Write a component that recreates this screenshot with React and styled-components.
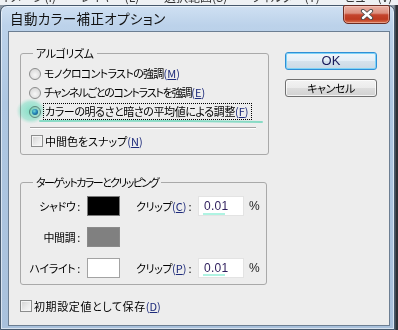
import React from 'react';
import styled, { createGlobalStyle, css } from 'styled-components';

const Global = createGlobalStyle`
  html, body { margin: 0; padding: 0; background: #2f353c; }
  body { font-family: "Noto Sans CJK JP", "Noto Sans", sans-serif; }
`;

const Screen = styled.div`
  position: relative;
  width: 398px;
  height: 330px;
  overflow: hidden;
  display: flex;
  flex-direction: column;
  background: linear-gradient(90deg, #8d98a4 0, #8d98a4 394px, #2c3137 396px, #2c3137 100%);
  font-family: "Noto Sans CJK JP", sans-serif;
  font-feature-settings: "palt";
  color: #000;
`;

const BehindMenu = styled.div`
  height: 5px;
  flex: none;
  overflow: hidden;
  background: #eef1f4;
  white-space: nowrap;
`;

const BehindText = styled.div`
  margin-top: -10px;
  font-size: 12px;
  line-height: 14px;
  color: #333;
  word-spacing: 22px;
`;

const Window = styled.div`
  width: 395px;
  height: 325px;
  box-sizing: border-box;
  border: 1px solid #46586c;
  border-radius: 7px 7px 0 0;
  padding: 0 4px 3px 7px;
  display: flex;
  flex-direction: column;
  background: linear-gradient(180deg, #cfe0f2 0%, #bcd2ea 6%, #aec7e2 30%, #a9c1dc 100%);
  box-shadow: inset 0 0 0 1px rgba(255, 255, 255, 0.55);
`;

const TitleBar = styled.div`
  height: 25px;
  flex: none;
  display: flex;
  align-items: flex-start;
`;

const TitleText = styled.div`
  padding-left: 2px;
  font-size: 13.5px;
  line-height: 24px;
  color: #111;
  letter-spacing: 0.4px;
`;

const CloseButton = styled.div`
  margin-left: auto;
  margin-top: -1px;
  width: 47px;
  height: 19px;
  box-sizing: border-box;
  border: 1px solid #6b2d24;
  border-radius: 2px 2px 5px 5px;
  display: flex;
  align-items: center;
  justify-content: center;
  background: linear-gradient(180deg, #eab2a6 0%, #dc8f7e 42%, #c4452d 52%, #bd3a20 78%, #d9714f 100%);
  box-shadow: inset 0 0 0 1px rgba(255, 220, 210, 0.45);
`;

const Client = styled.div`
  flex: 1;
  box-sizing: border-box;
  border: 1px solid #6c7e92;
  background: #ededed;
  display: flex;
  align-items: flex-start;
  gap: 16px;
  padding: 14px 0 0 11px;
  font-size: 11px;
  letter-spacing: -0.4px;
`;

const LeftCol = styled.div`
  width: 249px;
  display: flex;
  flex-direction: column;
`;

const RightCol = styled.div`
  padding-top: 6px;
  display: flex;
  flex-direction: column;
  gap: 9px;
`;

const Group = styled.fieldset`
  margin: ${p => p.$top || 0}px 0 0 0;
  width: ${p => p.$width}px;
  box-sizing: border-box;
  min-width: 0;
  border: 1px solid #a9a9a9;
  border-radius: 3px;
  padding: ${p => p.$pad};
  display: flex;
  flex-direction: column;
`;

const Legend = styled.legend`
  margin-left: ${p => p.$ml}px;
  padding: 0 3px;
  font-size: 11px;
  line-height: 14px;
  letter-spacing: ${p => p.$ls ?? -0.4}px;
  color: #000;
`;

const OptionRow = styled.div`
  height: 19px;
  display: flex;
  align-items: center;
  gap: 3px;
`;

const RadioDot = styled.span`
  width: 12px;
  height: 12px;
  flex: none;
  box-sizing: border-box;
  border-radius: 50%;
  border: 1px solid #8b8c8c;
  background: radial-gradient(circle at 50% 60%, #f7f7f7 0%, #dcdcdc 70%, #cfcfcf 100%);
  display: flex;
  align-items: center;
  justify-content: center;
  ${p => p.$on && css`
    &::after {
      content: "";
      width: 6px;
      height: 6px;
      border-radius: 50%;
      background: radial-gradient(circle at 38% 35%, #b8e2fb 0%, #3b8fd6 45%, #14427e 100%);
    }
  `}
`;

const Label = styled.span`
  font-size: 11px;
  line-height: 15px;
  white-space: nowrap;
  letter-spacing: ${p => p.$ls ?? -0.4}px;
  ${p => p.$focus && css`
    outline: 1px dotted #000;
    outline-offset: 0;
    padding: 0 2px 0 1px;
  `}
`;

const Mn = styled.span`
  color: #1d2a7a;
  letter-spacing: 0;
  & u { text-underline-offset: 1px; }
`;

const Separator = styled.div`
  height: 1px;
  margin: 6px 4px 5px 1px;
  background: #a2a2a2;
  box-shadow: 0 1px 0 #fff;
`;

const CheckRow = styled.div`
  height: 16px;
  display: flex;
  align-items: center;
  gap: 2px;
  margin-left: ${p => p.$ml || 0}px;
  margin-top: ${p => p.$mt || 0}px;
`;

const CheckBox = styled.span`
  width: 12px;
  height: 12px;
  flex: none;
  box-sizing: border-box;
  border: 1px solid #8b8c8c;
  background: linear-gradient(135deg, #d2d2d2 0%, #ececec 60%, #f8f8f8 100%);
  box-shadow: inset 0 0 0 1px #f4f4f4;
`;

const TargetRow = styled.div`
  height: 20px;
  display: flex;
  align-items: center;
  margin-top: ${p => p.$mt || 0}px;
`;

const RowLabel = styled.span`
  width: 55px;
  flex: none;
  text-align: right;
  font-size: 11px;
  line-height: 15px;
  white-space: nowrap;
`;

const Swatch = styled.span`
  width: 33px;
  height: 20px;
  margin-left: 7px;
  flex: none;
  box-sizing: border-box;
  border: 1px solid ${p => p.$border};
  background: ${p => p.$color};
`;

const ClipLabel = styled.span`
  margin-left: 16px;
  width: 57px;
  flex: none;
  font-size: 11px;
  line-height: 15px;
  white-space: nowrap;
`;

const ValueBox = styled.span`
  margin-left: 5px;
  width: 46px;
  height: 20px;
  flex: none;
  box-sizing: border-box;
  border: 1px solid #e3e3e3;
  background: #fff;
  padding-left: 5px;
  font-family: "Liberation Sans", "Noto Sans", sans-serif;
  font-size: 12px;
  line-height: 18px;
  letter-spacing: 0.3px;
  color: #2d1d5c;
`;

const Percent = styled.span`
  margin-left: 5px;
  font-family: "Liberation Sans", sans-serif;
  font-size: 12px;
  letter-spacing: 0;
  color: #222;
`;

const Button = styled.div`
  width: 92px;
  height: 18px;
  box-sizing: border-box;
  border: 1px solid ${p => (p.$default ? '#2f8fd6' : '#707070')};
  border-radius: 3px;
  display: flex;
  align-items: center;
  justify-content: center;
  font-size: 11px;
  line-height: 14px;
  color: #000;
  background: ${p => (p.$default
    ? 'linear-gradient(180deg, #f0f6fb 0%, #e4eef6 50%, #d5e2ec 52%, #cbd9e5 100%)'
    : 'linear-gradient(180deg, #f3f3f3 0%, #ebebeb 50%, #dddddd 52%, #d1d1d1 100%)')};
  box-shadow: ${p => (p.$default
    ? 'inset 0 0 0 1px #7fd3f7'
    : 'inset 0 0 0 1px rgba(255,255,255,0.7)')};
`;

const OkText = styled.span`
  font-family: "Liberation Sans", sans-serif;
  font-size: 13px;
  letter-spacing: 0;
  color: #1a1a5a;
`;

const Overlay = styled.svg`
  position: absolute;
  left: 0;
  top: 0;
  width: 398px;
  height: 330px;
  pointer-events: none;
  mix-blend-mode: multiply;
`;

const M = ({ k }) => (
  <Mn>(<u>{k}</u>)</Mn>
);

export default function App() {
  return (
    <>
      <Global />
      <Screen>
        <BehindMenu>
          <BehindText>イメージ(I) レイヤー(L) 選択範囲(S) フィルター(T) ビュー(V) ウィンドウ(W) ヘルプ(H)</BehindText>
        </BehindMenu>
        <Window>
          <TitleBar>
            <TitleText>自動カラー補正オプション</TitleText>
            <CloseButton>
              <svg width="14" height="11" viewBox="0 0 14 11">
                <path d="M3 2 L11 9 M11 2 L3 9" stroke="#4a4a4a" strokeWidth="4.2" strokeLinecap="round" />
                <path d="M3 2 L11 9 M11 2 L3 9" stroke="#ffffff" strokeWidth="2.4" strokeLinecap="round" />
              </svg>
            </CloseButton>
          </TitleBar>
          <Client>
            <LeftCol>
              <Group $width={249} $pad="4px 8px 5px 8px">
                <Legend $ml={4}>アルゴリズム</Legend>
                <OptionRow>
                  <RadioDot />
                  <Label $ls={-0.7}>モノクロコントラストの強調<M k="M" /></Label>
                </OptionRow>
                <OptionRow>
                  <RadioDot />
                  <Label $ls={-1.2}>チャンネルごとのコントラストを強調<M k="E" /></Label>
                </OptionRow>
                <OptionRow>
                  <RadioDot $on />
                  <Label $focus>カラーの明るさと暗さの平均値による調整<M k="F" /></Label>
                </OptionRow>
                <Separator />
                <CheckRow $ml={2}>
                  <CheckBox />
                  <Label $ls={0}>中間色をスナップ<M k="N" /></Label>
                </CheckRow>
              </Group>

              <Group $width={247} $top={20} $pad="7px 4px 6px 4px">
                <Legend $ml={8} $ls={-1.6}>ターゲットカラーとクリッピング</Legend>
                <TargetRow>
                  <RowLabel>シャドウ :</RowLabel>
                  <Swatch $color="#000" $border="#7a7a7a" />
                  <ClipLabel>クリップ<M k="C" /> :</ClipLabel>
                  <ValueBox>0.01</ValueBox>
                  <Percent>%</Percent>
                </TargetRow>
                <TargetRow $mt={11}>
                  <RowLabel>中間調 :</RowLabel>
                  <Swatch $color="#808080" $border="#8a8a8a" />
                </TargetRow>
                <TargetRow $mt={11}>
                  <RowLabel>ハイライト :</RowLabel>
                  <Swatch $color="#fff" $border="#a3a3a3" />
                  <ClipLabel>クリップ<M k="P" /> :</ClipLabel>
                  <ValueBox>0.01</ValueBox>
                  <Percent>%</Percent>
                </TargetRow>
              </Group>

              <CheckRow $mt={13}>
                <CheckBox />
                <Label $ls={0.6}>初期設定値として保存<M k="D" /></Label>
              </CheckRow>
            </LeftCol>
            <RightCol>
              <Button $default><OkText>OK</OkText></Button>
              <Button>キャンセル</Button>
            </RightCol>
          </Client>
        </Window>
        <Overlay viewBox="0 0 398 330">
          <defs>
            <radialGradient id="glow" cx="50%" cy="50%" r="50%">
              <stop offset="0%" stopColor="#7ff0d0" stopOpacity="0.9" />
              <stop offset="70%" stopColor="#9ff3dc" stopOpacity="0.7" />
              <stop offset="100%" stopColor="#c8f8ea" stopOpacity="0" />
            </radialGradient>
          </defs>
          <ellipse cx="31" cy="111" rx="15" ry="13" fill="url(#glow)" />
          <path d="M40 121 Q150 120 262 122" stroke="#92ecd4" strokeWidth="2" fill="none" strokeLinecap="round" />
          <path d="M203 214 L225 214" stroke="#95efd8" strokeWidth="1.5" />
          <path d="M203 275 L225 275" stroke="#95efd8" strokeWidth="1.5" />
        </Overlay>
      </Screen>
    </>
  );
}
